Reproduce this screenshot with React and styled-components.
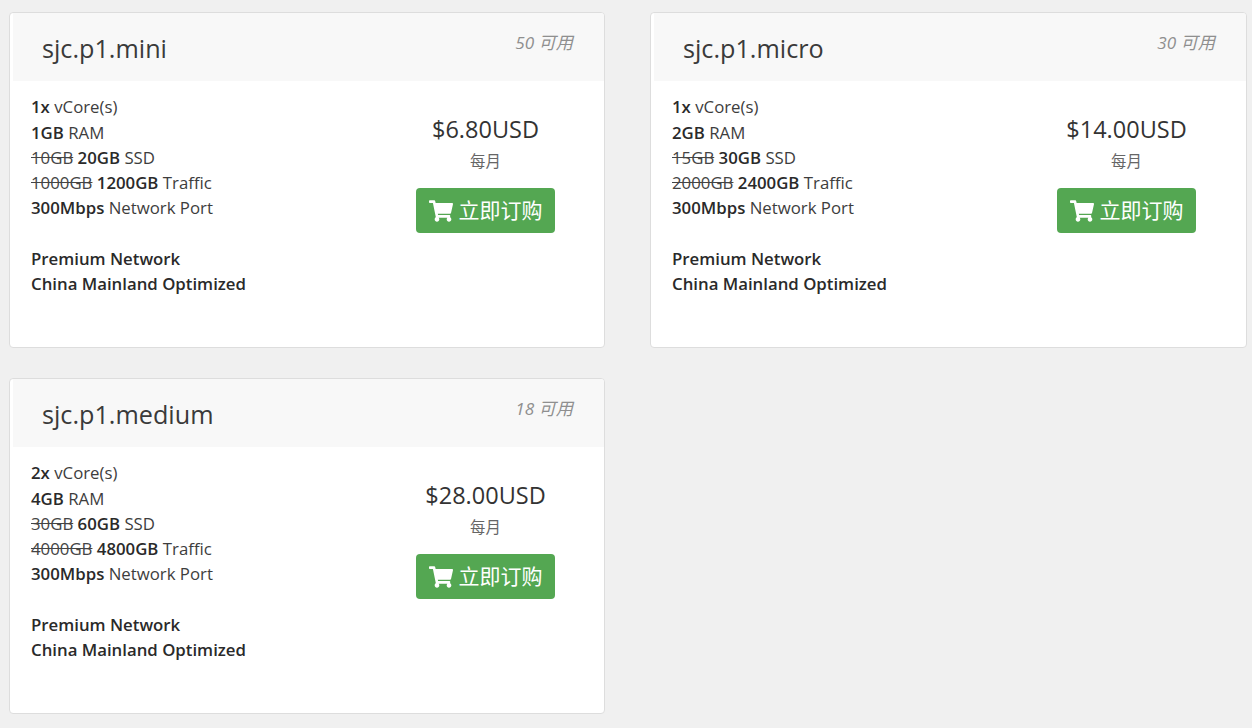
import React from "react";
import styled, { createGlobalStyle } from "styled-components";
import { FaShoppingCart } from "react-icons/fa";

const Global = createGlobalStyle`
  html, body { margin: 0; padding: 0; background: #f0f0f0; }
  body { font-family: "Open Sans", "Noto Sans CJK SC", sans-serif; color: #333; }
`;

const Grid = styled.div`
  display: grid;
  grid-template-columns: 596px 597px;
  column-gap: 45px;
  row-gap: 30px;
  padding: 12px 0 14px 9px;
  align-items: start;
`;

const Card = styled.div`
  height: 336px;
  box-sizing: border-box;
  background: #fff;
  border: 1px solid #ddd;
  border-radius: 4px;
  overflow: hidden;
`;

const Header = styled.div`
  height: 68px;
  margin-left: 3px;
  background: #f8f8f8;
  display: flex;
  justify-content: space-between;
  align-items: flex-start;
  padding: 0 31px 0 29px;
  box-sizing: border-box;
`;

const Title = styled.h3`
  margin: 17px 0 0;
  font-size: 25.2px;
  line-height: 36px;
  font-weight: 400;
  color: #3a3a3a;
`;

const Qty = styled.em`
  margin-top: 19.6px;
  font-size: 17.2px;
  line-height: 20px;
  color: #8f8f8f;
  font-style: italic;
`;

const Body = styled.div`
  display: flex;
  padding: 13.4px 0 0 21px;
`;

const Specs = styled.div`
  width: 385px;
  font-size: 16.8px;
  line-height: 25.2px;
  color: #3d3d3d;
`;

const Spec = styled.div``;

const Gap = styled.div`
  height: 25.2px;
`;

const Strong = styled.b`
  font-weight: 600;
  color: #2a2a2a;
`;

const Old = styled.s`
  color: #444;
`;

const Buy = styled.div`
  width: 139px;
  display: flex;
  flex-direction: column;
  align-items: center;
  padding-top: 19.6px;
`;

const Price = styled.div`
  font-size: 23.5px;
  line-height: 30px;
  color: #333;
  white-space: nowrap;
`;

const Cycle = styled.div`
  margin-top: 7.6px;
  font-size: 15.4px;
  line-height: 20px;
  color: #666;
`;

const Order = styled.button`
  margin-top: 16.6px;
  width: 139px;
  height: 45px;
  border: 0;
  border-radius: 4px;
  background: #54a752;
  color: #fff;
  font-family: inherit;
  font-size: 21px;
  display: flex;
  align-items: center;
  justify-content: center;
  gap: 6px;
  padding: 0;
`;

const OrderLabel = styled.span`
  padding-bottom: 4px;
`;

const plans = [
  { name: "sjc.p1.mini", qty: 50, core: "1x", ram: "1GB", oldSsd: "10GB", ssd: "20GB", oldTraffic: "1000GB", traffic: "1200GB", price: "$6.80USD" },
  { name: "sjc.p1.micro", qty: 30, core: "1x", ram: "2GB", oldSsd: "15GB", ssd: "30GB", oldTraffic: "2000GB", traffic: "2400GB", price: "$14.00USD" },
  { name: "sjc.p1.medium", qty: 18, core: "2x", ram: "4GB", oldSsd: "30GB", ssd: "60GB", oldTraffic: "4000GB", traffic: "4800GB", price: "$28.00USD" },
];

export default function App() {
  return (
    <>
      <Global />
      <Grid>
        {plans.map((p) => (
          <Card key={p.name}>
            <Header>
              <Title>{p.name}</Title>
              <Qty>{p.qty} 可用</Qty>
            </Header>
            <Body>
              <Specs>
                <Spec><Strong>{p.core}</Strong> vCore(s)</Spec>
                <Spec><Strong>{p.ram}</Strong> RAM</Spec>
                <Spec><Old>{p.oldSsd}</Old> <Strong>{p.ssd}</Strong> SSD</Spec>
                <Spec><Old>{p.oldTraffic}</Old> <Strong>{p.traffic}</Strong> Traffic</Spec>
                <Spec><Strong>300Mbps</Strong> Network Port</Spec>
                <Gap />
                <Spec><Strong>Premium Network</Strong></Spec>
                <Spec><Strong>China Mainland Optimized</Strong></Spec>
              </Specs>
              <Buy>
                <Price>{p.price}</Price>
                <Cycle>每月</Cycle>
                <Order><FaShoppingCart size={24} /><OrderLabel>立即订购</OrderLabel></Order>
              </Buy>
            </Body>
          </Card>
        ))}
      </Grid>
    </>
  );
}
